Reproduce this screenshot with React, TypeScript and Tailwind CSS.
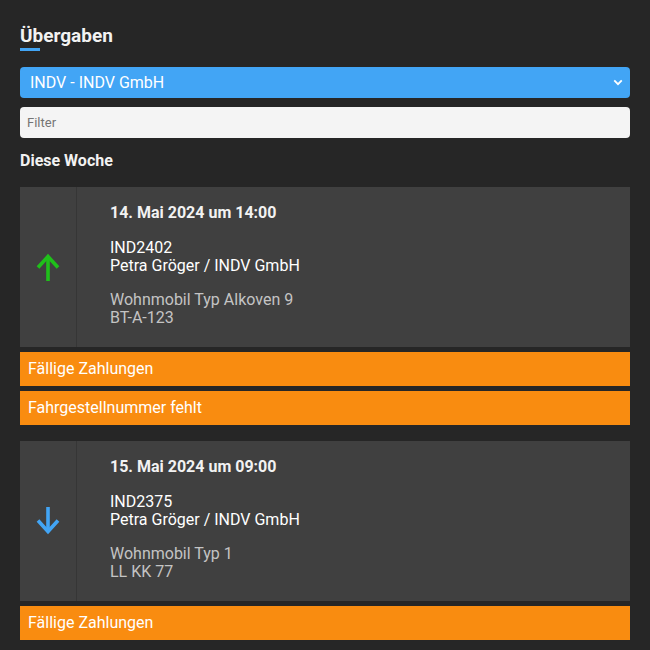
import React from 'react';

type Handover = {
  id: string;
  direction: 'out' | 'in';
  date: string;
  customer: string;
  vehicle: string;
  plate: string;
  warnings: string[];
};

const handovers: Handover[] = [
  {
    id: 'IND2402',
    direction: 'out',
    date: '14. Mai 2024 um 14:00',
    customer: 'Petra Gröger / INDV GmbH',
    vehicle: 'Wohnmobil Typ Alkoven 9',
    plate: 'BT-A-123',
    warnings: ['Fällige Zahlungen', 'Fahrgestellnummer fehlt'],
  },
  {
    id: 'IND2375',
    direction: 'in',
    date: '15. Mai 2024 um 09:00',
    customer: 'Petra Gröger / INDV GmbH',
    vehicle: 'Wohnmobil Typ 1',
    plate: 'LL KK 77',
    warnings: ['Fällige Zahlungen'],
  },
];

// thick arrow, 24x28
const ArrowIcon = ({ direction }: { direction: Handover['direction'] }) => (
  <svg
    viewBox="0 0 24 28"
    className={direction === 'out' ? 'w-6 h-7 stroke-[#1fc01a]' : 'w-6 h-7 stroke-[#42a5f5] rotate-180'}
    fill="none"
    strokeWidth="3.6"
  >
    <path d="M12 4v24" />
    <path d="M2 14.5L12 3.5l10 11" strokeLinejoin="miter" />
  </svg>
);

const HandoverCard = ({ item }: { item: Handover }) => (
  <div className="mb-4">
    <div className="flex bg-[#404040]">
      <div className="w-[57px] shrink-0 flex items-center justify-center border-r border-[#363636]">
        <ArrowIcon direction={item.direction} />
      </div>
      <div className="pl-[33px] pt-[17px] pb-5 text-base leading-[18px]">
        <div className="font-bold text-[#f2f2f2] mb-[17px]">{item.date}</div>
        <div className="text-white mb-4">
          <div>{item.id}</div>
          <div>{item.customer}</div>
        </div>
        <div className="text-[#c4c4c4]">
          <div>{item.vehicle}</div>
          <div>{item.plate}</div>
        </div>
      </div>
    </div>
    {item.warnings.map((w) => (
      <div
        key={w}
        className="mt-[5px] h-[34px] flex items-center px-2 bg-[#f98c10] text-white text-base"
      >
        {w}
      </div>
    ))}
  </div>
);

export default function App() {
  return (
    <div className="min-h-screen bg-[#262626] px-5 pt-6 font-['Roboto',sans-serif]">
      <h1 className="text-[19px] leading-6 font-bold text-[#f2f2f2]">Übergaben</h1>
      <div className="w-5 h-[3px] bg-[#42a5f5]" />

      <div className="relative mt-4">
        <select className="w-full h-[31px] appearance-none rounded bg-[#42a5f5] text-white text-base pl-[10px] outline-none">
          <option>INDV - INDV GmbH</option>
        </select>
        <svg
          viewBox="0 0 12 8"
          className="absolute right-[7px] top-[12px] w-[10px] h-[7px] pointer-events-none"
        >
          <path d="M1.5 1.5L6 6l4.5-4.5" fill="none" stroke="white" strokeWidth="2.2" />
        </svg>
      </div>

      <input
        className="mt-[9px] w-full h-[31px] rounded bg-[#f4f4f4] px-[7px] text-[13px] text-[#333] placeholder:text-[#757575] outline-none"
        placeholder="Filter"
      />

      <h2 className="mt-[13px] text-base leading-5 font-bold text-[#f2f2f2]">Diese Woche</h2>

      <div className="mt-4">
        {handovers.map((h) => (
          <HandoverCard key={h.id} item={h} />
        ))}
      </div>
    </div>
  );
}
